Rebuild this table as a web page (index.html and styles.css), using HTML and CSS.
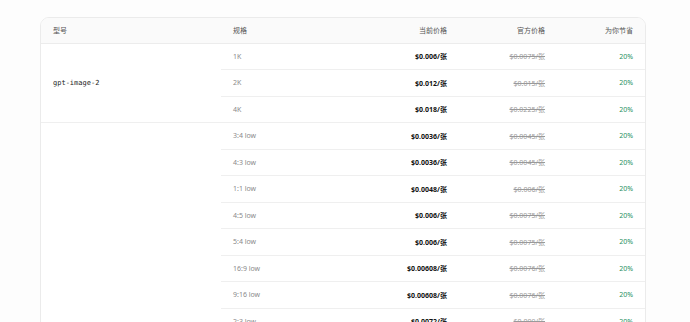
FILE: index.html
```html
<!DOCTYPE html>
<html lang="zh">
<head>
<meta charset="utf-8">
<link rel="stylesheet" href="styles.css">
</head>
<body>
<div class="page">
  <div class="card">
    <table class="price-table">
      <colgroup>
        <col class="c-model"><col class="c-spec"><col class="c-cur"><col class="c-off"><col class="c-save">
      </colgroup>
      <thead>
        <tr>
          <th class="left">型号</th>
          <th class="left">规格</th>
          <th class="right">当前价格</th>
          <th class="right">官方价格</th>
          <th class="right">为你节省</th>
        </tr>
      </thead>
      <tbody>
        <tr>
          <td class="model" rowspan="3">gpt-image-2</td>
          <td class="spec">1K</td><td class="cur">$0.006/张</td><td class="off"><s>$0.0075/张</s></td><td class="save">20%</td>
        </tr>
        <tr>
          <td class="spec">2K</td><td class="cur">$0.012/张</td><td class="off"><s>$0.015/张</s></td><td class="save">20%</td>
        </tr>
        <tr>
          <td class="spec">4K</td><td class="cur">$0.018/张</td><td class="off"><s>$0.0225/张</s></td><td class="save">20%</td>
        </tr>
        <tr>
          <td class="model" rowspan="8"></td>
          <td class="spec">3:4 low</td><td class="cur">$0.0036/张</td><td class="off"><s>$0.0045/张</s></td><td class="save">20%</td>
        </tr>
        <tr>
          <td class="spec">4:3 low</td><td class="cur">$0.0036/张</td><td class="off"><s>$0.0045/张</s></td><td class="save">20%</td>
        </tr>
        <tr>
          <td class="spec">1:1 low</td><td class="cur">$0.0048/张</td><td class="off"><s>$0.006/张</s></td><td class="save">20%</td>
        </tr>
        <tr>
          <td class="spec">4:5 low</td><td class="cur">$0.006/张</td><td class="off"><s>$0.0075/张</s></td><td class="save">20%</td>
        </tr>
        <tr>
          <td class="spec">5:4 low</td><td class="cur">$0.006/张</td><td class="off"><s>$0.0075/张</s></td><td class="save">20%</td>
        </tr>
        <tr>
          <td class="spec">16:9 low</td><td class="cur">$0.00608/张</td><td class="off"><s>$0.0076/张</s></td><td class="save">20%</td>
        </tr>
        <tr>
          <td class="spec">9:16 low</td><td class="cur">$0.00608/张</td><td class="off"><s>$0.0076/张</s></td><td class="save">20%</td>
        </tr>
        <tr>
          <td class="spec">2:3 low</td><td class="cur">$0.0072/张</td><td class="off"><s>$0.009/张</s></td><td class="save">20%</td>
        </tr>
      </tbody>
    </table>
  </div>
</div>
</body>
</html>
```

FILE: styles.css
```css
html, body {
  margin: 0;
  padding: 0;
  background: #fdfdfd;
}
body {
  font-family: "Noto Sans", "Noto Sans CJK SC", sans-serif;
  font-size: 7px;
  color: #222;
}
.page {
  padding: 17px 0 0 40px;
}
.card {
  width: 604px;
  border: 1px solid #ebebeb;
  border-radius: 9px;
  background: #fff;
  overflow: hidden;
}
.price-table {
  width: 604px;
  border-collapse: collapse;
  table-layout: fixed;
}
.c-model { width: 180px; }
.c-spec { width: 120px; }
.c-cur { width: 118px; }
.c-off { width: 98px; }
.c-save { width: 88px; }
th {
  height: 25px;
  padding: 0 12px;
  background: #fafafa;
  font-weight: 400;
  color: #555;
  border-bottom: 1px solid #ececec;
  box-sizing: border-box;
}
th.left { text-align: left; }
th.right { text-align: right; }
td {
  height: 26.5px;
  padding: 0 12px;
  box-sizing: border-box;
  border-bottom: 1px solid #efefef;
  vertical-align: middle;
}
td.model {
  font-family: "DejaVu Sans Mono", monospace;
  color: #1a1a1a;
}
.spec { color: #8a8a8a; }
.cur { text-align: right; font-weight: 700; color: #111; }
.off { text-align: right; color: #9a9a9a; }
.off s { text-decoration-color: #9a9a9a; }
.save { text-align: right; color: #1f8f62; }
```
